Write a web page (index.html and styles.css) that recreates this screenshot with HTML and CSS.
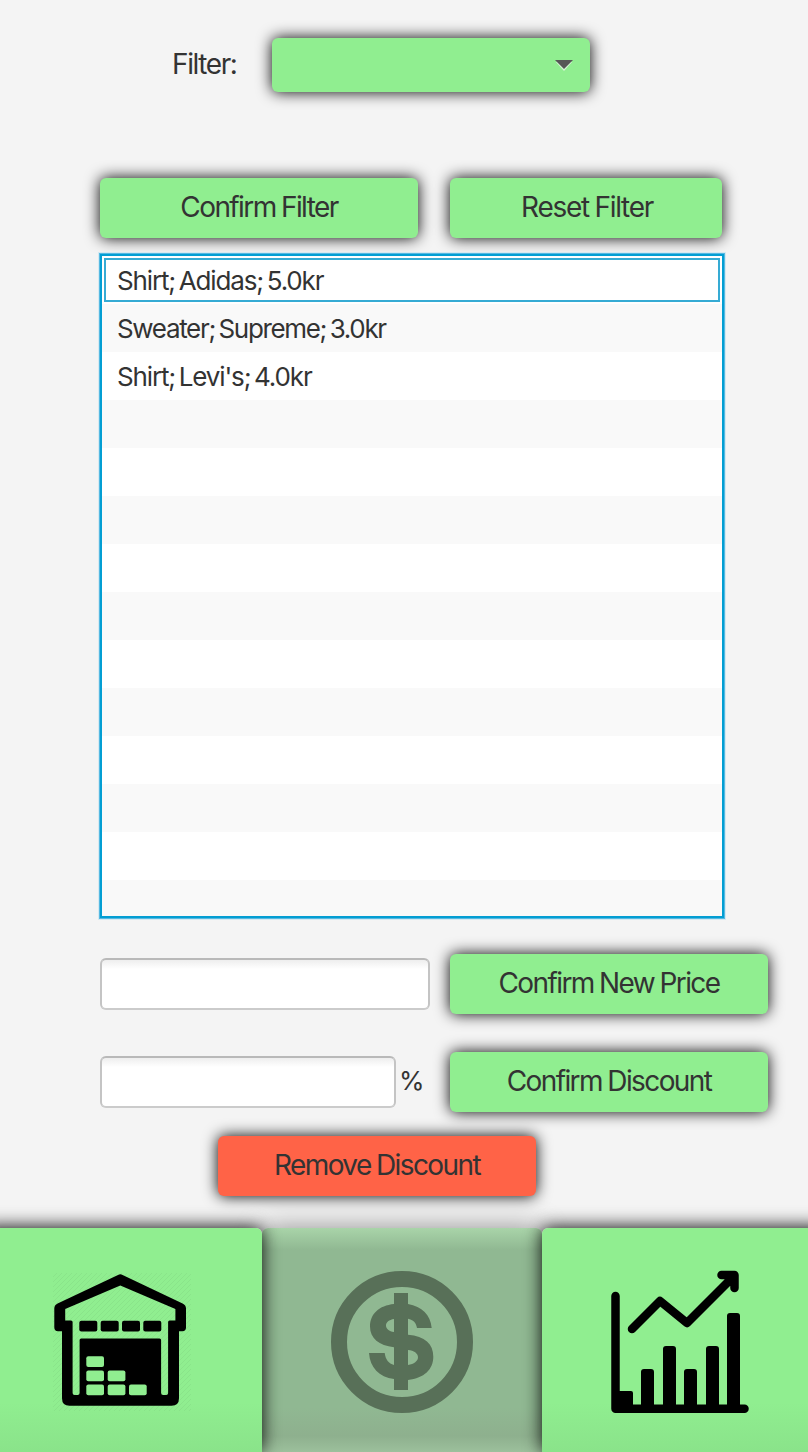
FILE: index.html
```html
<!DOCTYPE html>
<html lang="en">
<head>
<meta charset="utf-8">
<title>Discounts</title>
<link rel="stylesheet" href="styles.css">
</head>
<body>
<main class="screen">
  <div class="filter-row">
    <span class="filter-label">Filter:</span>
    <div class="combo" role="combobox" aria-label="Filter">
      <svg class="combo-arrow" width="18" height="12" viewBox="0 0 18 12"><path fill="#d9f5d9" d="M1 2h16L9 11z"/><path fill="#575757" d="M0 0h18L9 9z"/></svg>
    </div>
  </div>
  <div class="actions">
    <button class="btn confirm-filter">Confirm Filter</button>
    <button class="btn reset-filter">Reset Filter</button>
  </div>
  <ul class="list">
    <li class="focused"><span>Shirt; Adidas; 5.0kr</span></li>
    <li class="tight">Sweater; Supreme; 3.0kr</li>
    <li>Shirt; Levi's; 4.0kr</li>
    <li></li><li></li><li></li><li></li><li></li><li></li><li></li><li></li><li></li><li></li><li></li>
  </ul>
  <div class="form-row">
    <input class="field price" aria-label="New price">
    <button class="btn">Confirm New Price</button>
  </div>
  <div class="form-row">
    <input class="field percent" aria-label="Discount">
    <span class="unit">%</span>
    <button class="btn">Confirm Discount</button>
  </div>
  <button class="btn remove">Remove Discount</button>
  <nav class="nav">
    <a class="tab tab-stock">
      <svg width="262" height="224" viewBox="0 1228 262 224">
        <defs><pattern id="hatch" width="5" height="5" patternUnits="userSpaceOnUse"><path d="M0 5L5 0" stroke="#000" stroke-opacity=".06" stroke-width=".8"/></pattern></defs>
        <rect x="53" y="1273" width="138" height="138" fill="url(#hatch)"/>
        <path fill-rule="evenodd" d="M118 1275q2.300-1.300 4.600 0l60 28.500q3.400 1.700 3.400 5v19q0 3.700-3.700 3.700H179v67q0 7.500-7.500 7.500h-102q-7.500 0-7.500-7.500v-67h-4q-3.700 0-3.700-3.700v-19q0-3.300 3.300-5zM120.300 1285.500L65.200 1309v11.500H71q1.600 0 1.600 1.600v71q0 2 2 2h3q2 0 2-2v-53q0-1.600 1.600-1.600h78.300q1.600 0 1.600 1.600v53q0 2 2 2h3q2 0 2-2v-71q0-1.600 1.600-1.600h5.700V1309z"/>
        <g><rect x="79.300" y="1320.700" width="18" height="10.700" rx="2"/><rect x="100.700" y="1320.700" width="18" height="10.700" rx="2"/><rect x="122" y="1320.700" width="18" height="10.700" rx="2"/><rect x="143.300" y="1320.700" width="18" height="10.700" rx="2"/></g>
        <g fill="#90ee90"><rect x="86.300" y="1356.300" width="17.700" height="10.700" rx="2"/><rect x="86.300" y="1370.500" width="17.700" height="10.700" rx="2"/><rect x="107.700" y="1370.500" width="17.700" height="10.700" rx="2"/><rect x="86.300" y="1384.500" width="17.700" height="10.700" rx="2"/><rect x="107.700" y="1384.500" width="17.700" height="10.700" rx="2"/><rect x="129" y="1384.500" width="17.700" height="10.700" rx="2"/></g>
      </svg>
    </a>
    <a class="tab tab-price">
      <svg width="280" height="224" viewBox="262 1228 280 224">
        <circle cx="402" cy="1342" r="63" fill="none" stroke="#587058" stroke-width="16"/>
        <path fill="#587058" fill-rule="evenodd" d="M394 1293h14v11c14 2.500 22.500 11 23.700 24H417c-.8-5-3.700-8.200-9-9.200v16c17 1.600 25.300 9 25.300 22 0 12.500-9 21.500-25.300 23.200v10h-14v-11c-15-2-24-11.500-25-26h15.700c.8 6.500 4 10.500 9.300 12v-17.800c-15-1.500-24-9-24-20.700 0-12.500 9-21 24-22.500zM394 1319c-5 .8-8 3.200-8 6.600s3 5.800 8 6.500zM408 1350v15c6-1 10-4 10-7.800s-4-6.700-10-7.200z"/>
      </svg>
    </a>
    <a class="tab tab-stats">
      <svg width="266" height="224" viewBox="542 1228 266 224">
        <path fill="none" stroke="#000" stroke-width="8.500" stroke-linecap="round" stroke-linejoin="round" d="M615.500 1296v112.800h129M632 1329l28-28 27 22 46-46M721.500 1275h13v13"/>
        <path d="M615 1391h16q2 0 2 2v17h-18zM641 1409v-37q0-3 3-3h7q3 0 3 3v37zM663 1409v-60q0-3 3-3h7q3 0 3 3v60zM684 1409v-37q0-3 3-3h7q3 0 3 3v37zM706 1409v-60q0-3 3-3h7q3 0 3 3v60zM727 1409v-93q0-3 3-3h7q3 0 3 3v93zM726 1275h9v14z"/>
      </svg>
    </a>
  </nav>
</main>
</body>
</html>
```
FILE: styles.css
```css
* { box-sizing: border-box; }
body { margin: 0; background: #f4f4f4; color: #333; font-family: Inter, "Liberation Sans", sans-serif; }
.screen { width: 808px; height: 1452px; padding-top: 38px; overflow: hidden; display: flex; flex-direction: column; }

.filter-row { display: flex; align-items: center; height: 54px; padding-left: 172px; }
.filter-label { width: 100px; font-size: 28px; letter-spacing: -1.4px; line-height: 52px; padding-bottom: 2px; }
.combo { width: 318px; height: 54px; border-radius: 6px; background: #90ee90; box-shadow: 0 0 15px #000; display: flex; align-items: center; justify-content: flex-end; padding: 2px 17px 0 0; }

.btn { width: 318px; height: 60px; padding: 0 0 2px; border: 0; border-radius: 6px; background: #90ee90; box-shadow: 0 0 15px #000; color: #333; font: 28px/58px Inter, "Liberation Sans", sans-serif; letter-spacing: -1.6px; word-spacing: -.9px; flex: none; }
.actions { display: flex; gap: 32px; margin: 86px 0 0 100px; }
.reset-filter { width: 272px; letter-spacing: -1.3px; padding-left: 2px; }

.list { list-style: none; width: 626px; height: 666px; margin: 15px 0 0 99px; padding: 2px 0 0; overflow: hidden; background: #fff; border: 1px solid #55b9e2; outline: 1px solid #d5e9f1; box-shadow: inset 0 0 0 2px #039ed3; flex: none; }
.list li { height: 48px; margin: 0 2px; padding-left: 15px; font-size: 26px; line-height: 49px; letter-spacing: -1.15px; word-spacing: -2.4px; background: #fff; white-space: nowrap; }
.list .tight { letter-spacing: -1.33px; }
.list li:nth-child(even) { background: #f9f9f9; }
.list li:last-child { height: 36px; }
.list .focused { border: 2px solid #fff; padding: 0; }
.focused span { display: block; height: 44px; border: 2px solid #36abd4; padding-left: 11px; line-height: 41px; }

.form-row { display: flex; align-items: center; width: 668px; height: 60px; margin: 35px 0 0 100px; flex: none; }
.form-row + .form-row { margin-top: 38px; }
.form-row .btn { margin-left: auto; }
.field { height: 52px; border: 2px solid; border-color: #b9b9b9 #c4c4c4 #cbcbcb; border-radius: 6px; background: linear-gradient(#eee, #fff 9px); outline: 0; }
.price { width: 330px; }
.percent { width: 296px; }
.unit { margin-left: 3px; padding-bottom: 3px; font-size: 26px; letter-spacing: -1px; }
.btn.remove { margin: 24px 0 0 218px; background: #ff6347; }

.nav { display: flex; width: 848px; height: 224px; margin: 32px 0 0 -20px; flex: none; }
.tab { position: relative; z-index: 1; height: 224px; border-radius: 6px 6px 0 0; background: linear-gradient(#90ee90 78%, #8ae38a); box-shadow: 0 0 17px rgba(0, 0, 0, .85), 0 -7px 20px -5px rgba(0, 0, 0, .3); }
.tab svg { display: block; }
.tab-stock { width: 282px; padding-left: 20px; }
.tab-price { z-index: 0; width: 280px; background: linear-gradient(#a9d4a9, #90b892 22px, #90b892 180px, #8eb08e 208px, #9cc09c); box-shadow: 0 0 28px rgba(0, 0, 0, .42); }
.tab-stats { width: 286px; }
```
